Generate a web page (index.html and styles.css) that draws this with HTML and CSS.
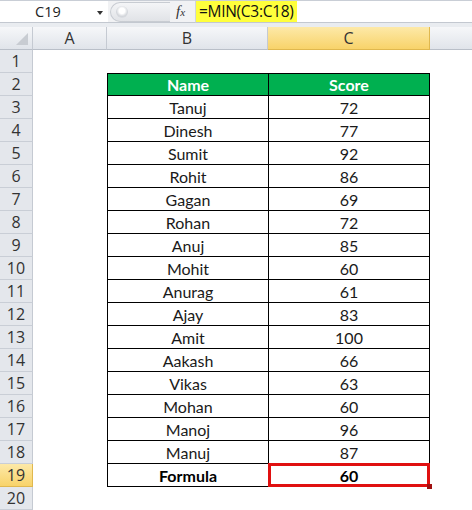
FILE: index.html
```html
<!DOCTYPE html>
<html>
<head>
<meta charset="utf-8">
<link rel="stylesheet" href="styles.css">
</head>
<body>
<div class="fbar">
  <div class="namebox"><span class="nb-text">C19</span><span class="nb-arrow"></span></div>
  <div class="fmid">
    <div class="pill"><span class="pill-dot"></span></div>
    <span class="fx">f<span class="fx-x">x</span></span>
  </div>
  <div class="finput"><span class="ftext">=MIN(C3:C18)</span></div>
</div>
<div class="sheet" id="sheet">
  <div class="ch corner"><span class="tri"></span></div>
  <div class="ch">A</div>
  <div class="ch">B</div>
  <div class="ch sel">C</div>
  <div class="ch last"></div>
</div>
<script src="app.js"></script>
</body>
</html>
```
FILE: styles.css
```css
html, body { margin: 0; padding: 0; background: #fff; }
body {
  width: 472px; height: 510px; overflow: hidden;
  font-family: Lato, "Open Sans", sans-serif;
}
.fbar {
  height: 27px;
  display: flex;
  background: #e9ecf0;
  border-top: 1px solid #c9ced6;
  box-sizing: border-box;
}
.namebox {
  width: 108px; height: 22px;
  background: #fff;
  border-bottom: 1px solid #c3c8d0;
  display: flex; align-items: center;
  position: relative;
  box-sizing: border-box;
}
.nb-text { margin-left: 35px; font-size: 14.5px; color: #222; font-family: "Open Sans", sans-serif; }
.nb-arrow {
  position: absolute; left: 97px; top: 10px;
  border-left: 3px solid transparent; border-right: 3px solid transparent;
  border-top: 4px solid #333;
}
.fmid {
  width: 87px; height: 22px; display: flex; align-items: center;
  background: #f1f2f4;
  border-bottom: 1px solid #c3c8d0;
  box-sizing: border-box;
  position: relative;
}
.pill {
  width: 60px; height: 20px; margin-left: 2px;
  border-radius: 10px 0 0 10px;
  border: 1px solid #c8ccd2; border-right: none;
  background: linear-gradient(#f4f5f7, #e1e3e7);
  box-sizing: border-box;
  position: relative;
}
.pill-dot {
  position: absolute; left: 5px; top: 3px; width: 12px; height: 12px; border-radius: 50%;
  background: radial-gradient(circle at 50% 40%, #fff 0 30%, #d3d6db 60%, #e6e8eb 100%);
}
.fx {
  position: absolute; left: 68px; top: 2px;
  font-family: "Liberation Serif", serif; font-style: italic; font-size: 15px; color: #333;
}
.fx-x { font-size: 11px; }
.finput {
  flex: 1; height: 22px; background: #fff;
  border-bottom: 1px solid #c3c8d0; border-left: 1px solid #d0d4da;
  box-sizing: border-box;
  display: flex; align-items: stretch;
}
.ftext {
  background: #ffff3c; padding: 0 3px 0 3px; font-size: 15.5px; line-height: 21px; color: #111;
  font-family: "Open Sans", sans-serif; letter-spacing: -0.3px;
}
.sheet {
  display: grid;
  grid-template-columns: 33px 74px 161px 162px 1fr;
  grid-auto-rows: 23px;
}
.ch {
  background: linear-gradient(#f6f7f9, #e0e4ea);
  border-right: 1px solid #c5cad2;
  border-bottom: 1px solid #b9bfc8;
  box-sizing: border-box;
  display: flex; align-items: center; justify-content: center;
  font-size: 16px; color: #333; font-family: "Open Sans", sans-serif;
}
.ch.sel {
  background: linear-gradient(#fde9a8, #f8d36a);
  border-right-color: #e0b84e; border-bottom-color: #e0b84e;
}
.ch.last { border-right: none; }
.corner { position: relative; }
.tri {
  position: absolute; right: 4px; bottom: 4px;
  border-left: 12px solid transparent; border-bottom: 12px solid #c8ccd2;
}
.rh {
  background: #e4e7ec;
  border-right: 1px solid #c5cad2;
  border-bottom: 1px solid #c9ced6;
  box-sizing: border-box;
  display: flex; align-items: center; justify-content: center;
  font-size: 16px; color: #333; font-family: "Open Sans", sans-serif;
}
.rh.sel { background: linear-gradient(#fde9a8, #f8d36a); border-bottom-color: #e0b84e; border-right-color: #e0b84e; }
.c { box-sizing: border-box; }
.t {
  display: flex; align-items: center; justify-content: center;
  font-size: 16px; color: #1a1a1a;
  border-bottom: 1px solid #000;
  border-left: 1px solid #000;
}
.t.cc { border-right: 1px solid #000; }
.t.top { border-top: 1px solid #000; }
.t.head { background: #00b050; color: #fff; font-weight: bold; }
.t.bold { font-weight: bold; color: #000; }
.t.active { position: relative; }
.active-box {
  position: absolute; left: -1px; top: -1px; right: -1px; bottom: -1px;
  border: 3px solid #e01010;
  pointer-events: none;
}
.handle {
  position: absolute; right: -3px; bottom: -3px; width: 5px; height: 5px; background: #a01010;
}
```
FILE: app.js
```javascript
const data = [
  ["Tanuj",72],["Dinesh",77],["Sumit",92],["Rohit",86],["Gagan",69],["Rohan",72],
  ["Anuj",85],["Mohit",60],["Anurag",61],["Ajay",83],["Amit",100],["Aakash",66],
  ["Vikas",63],["Mohan",60],["Manoj",96],["Manuj",87]
];
const sheet = document.getElementById('sheet');
function add(cls, text) {
  const d = document.createElement('div');
  d.className = cls;
  if (text !== undefined) d.textContent = text;
  sheet.appendChild(d);
  return d;
}
for (let r = 1; r <= 20; r++) {
  add('rh' + (r === 19 ? ' sel' : ''), String(r));
  add('c');
  if (r === 2) {
    add('c t head top', 'Name');
    add('c t cc head top', 'Score');
  } else if (r >= 3 && r <= 18) {
    add('c t', data[r-3][0]);
    add('c t cc', String(data[r-3][1]));
  } else if (r === 19) {
    add('c t bold', 'Formula');
    const c = add('c t cc bold active', '60');
    const box = document.createElement('div'); box.className = 'active-box'; c.appendChild(box);
    const h = document.createElement('div'); h.className = 'handle'; c.appendChild(h);
  } else {
    add('c'); add('c');
  }
  add('c');
}
```
